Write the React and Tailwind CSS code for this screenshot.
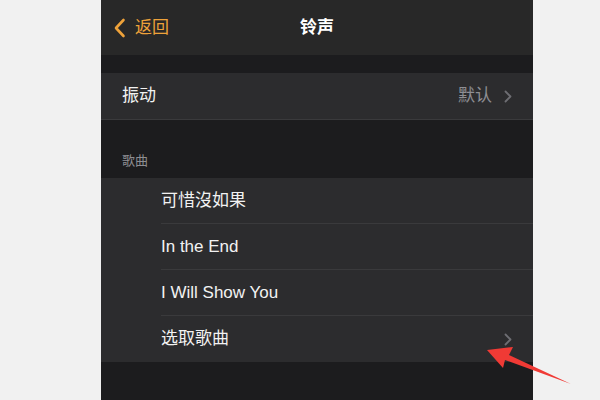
import React from "react"

const font = { fontFamily: '"Liberation Sans", "Noto Sans CJK SC", sans-serif' }

const Chevron = ({ className }) => (
  <svg className={className} width="8" height="13" viewBox="0 0 8 13" fill="none">
    <path d="M1.5 1.5 L6.5 6.5 L1.5 11.5" stroke="currentColor" strokeWidth="1.8" strokeLinecap="round" strokeLinejoin="round" />
  </svg>
)

const SongRow = ({ title, last, arrow }) => (
  <div className="flex h-[46px] pl-[60px]">
    <div className={`flex flex-1 items-center pr-[21px] ${last ? "" : "border-b border-[#3a3a3c]"}`}>
      <span className="flex-1 text-[17px] text-[#f2f2f2]">{title}</span>
      {arrow && <Chevron className="text-[#6e6e73]" />}
    </div>
  </div>
)

export default function App() {
  const songs = ["可惜沒如果", "In the End", "I Will Show You"]

  return (
    <div className="relative flex h-[400px] w-[600px] overflow-hidden bg-[#f1f1f1]" style={font}>
      <div className="ml-[101px] flex w-[432px] flex-col rounded-tr-[6px] bg-[#1c1c1e]">
        {/* navigation bar */}
        <div className="relative flex h-[55px] shrink-0 items-center justify-center bg-[#282828]">
          <div className="absolute left-[12px] top-[15px] flex items-center gap-[9px] text-[#eea23a]">
            <svg width="13" height="20" viewBox="0 0 13 20" fill="none">
              <path d="M10.5 2 L3 10 L10.5 18" stroke="currentColor" strokeWidth="2.6" strokeLinecap="round" strokeLinejoin="round" />
            </svg>
            <span className="text-[17px]">返回</span>
          </div>
          <span className="text-[17px] font-bold text-white">铃声</span>
        </div>

        <div className="h-[18px] shrink-0" />

        {/* vibration */}
        <div className="flex h-[47px] shrink-0 items-center border-b border-[#3a3a3c] bg-[#2c2c2e] px-[21px]">
          <span className="flex-1 text-[17px] text-[#f2f2f2]">振动</span>
          <span className="mr-[12px] text-[17px] text-[#8e8e93]">默认</span>
          <Chevron className="text-[#6e6e73]" />
        </div>

        {/* songs section */}
        <div className="flex h-[58px] shrink-0 items-end pb-[8px] pl-[21px]">
          <span className="text-[13px] text-[#8e8e93]">歌曲</span>
        </div>
        <div className="shrink-0 bg-[#2c2c2e]">
          {songs.map((s) => (
            <SongRow key={s} title={s} />
          ))}
          <SongRow title="选取歌曲" last arrow />
        </div>

        <div className="h-[60px] shrink-0 pl-[27px] pt-[33px]">
          <span className="text-[13px] text-[#8e8e93]">上次铃声</span>
        </div>
      </div>

      {/* red pointer */}
      <svg className="absolute left-0 top-0" width="600" height="400" viewBox="0 0 600 400">
        <polygon points="487,350 513,347 509,355 571,384 505,360 503,368" fill="#f03a35" />
      </svg>
    </div>
  )
}
